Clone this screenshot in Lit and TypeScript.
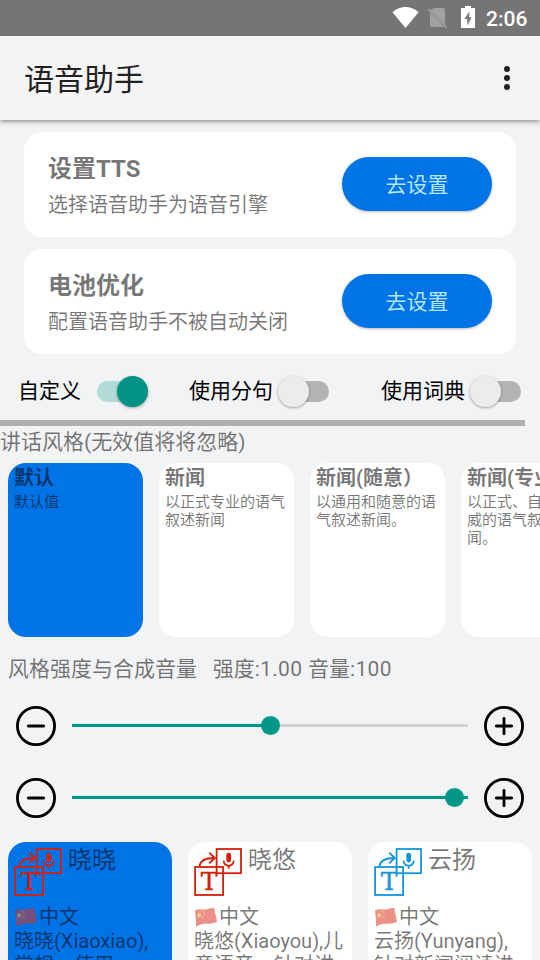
import { LitElement, html, css, svg } from "lit";
import { customElement, property } from "lit/decorators.js";
import { classMap } from "lit/directives/class-map.js";
import { styleMap } from "lit/directives/style-map.js";

@customElement("status-bar")
class StatusBar extends LitElement {
  static styles = css`
    :host { display: flex; height: 36px; background: #757575; color: #fff; flex: none;
      justify-content: flex-end; padding-right: 12px; box-sizing: border-box; position: relative; z-index: 1; }
    .time { font-weight: 500; font-size: 21px; line-height: 38px; width: 42px; margin-left: 10px; }
    svg { display: block; flex: none; }
  `;
  render() {
    return html`
      <svg width="84" height="36" viewBox="392 0 84 36">
        <path d="M392.4 12.2Q405.5 2 418.6 12.2L405.5 28Z" fill="#fff" />
        <path d="M434.2 8H443Q445 8 445 10V24.2L430.6 9.9ZM430 12.6L444 27H432Q430 27 430 25Z" fill="#a2a2a2" />
        <path d="M428.4 9.2L446.6 27.6" stroke="#a2a2a2" stroke-width="1.7" />
        <path d="M465 6h6v2h4v20h-14V8h4z" fill="#fff" />
        <path d="M469.6 11.5L464.3 19H467.3V25.5L471.7 17.3H469Z" fill="#757575" />
      </svg>
      <div class="time">2:06</div>
    `;
  }
}

@customElement("setting-card")
class SettingCard extends LitElement {
  @property() heading = "";
  @property() detail = "";
  static styles = css`
    :host { display: flex; align-items: center; justify-content: space-between; height: 105px;
      box-sizing: border-box; padding: 0 24px 1px; background: #fff; border-radius: 18px;
      color: rgba(0, 0, 0, 0.54); }
    .text { padding-top: 6px; }
    .heading { font-size: 24px; line-height: 36px; font-weight: 700; }
    .detail { font-size: 20px; line-height: 36px; }
    .go { font: inherit; font-size: 21px; width: 150px; height: 54px; padding: 0 0 2px; border: 0;
      border-radius: 27px; background: #0073e6; color: #b3e5fc;
      box-shadow: 0 1px 3px rgba(0, 0, 0, 0.28); }
  `;
  render() {
    return html`
      <div class="text">
        <div class="heading">${this.heading}</div>
        <div class="detail">${this.detail}</div>
      </div>
      <button class="go">去设置</button>
    `;
  }
}

@customElement("toggle-switch")
class ToggleSwitch extends LitElement {
  @property({ type: Boolean }) on = false;
  static styles = css`
    .switch { display: flex; align-items: center; width: 51px; height: 31px; }
    .track { display: flex; align-items: center; width: 51px; height: 21px; border-radius: 11px; background: #b3b4b6; }
    .thumb { width: 31px; height: 31px; border-radius: 50%; background: #ececec; flex: none;
      box-shadow: 0 1px 3px rgba(0, 0, 0, 0.35); }
    .on { justify-content: flex-end; background: #b2dcd8; }
    .on .thumb { background: #009385; }
  `;
  render() {
    return html`<div class="switch"><div class=${classMap({ track: true, on: this.on })}><div class="thumb"></div></div></div>`;
  }
}

@customElement("level-slider")
class LevelSlider extends LitElement {
  @property({ type: Number }) fill = 0;
  @property({ type: Number }) thumb = 0;
  static styles = css`
    :host { display: flex; align-items: center; flex: none; height: 72px; padding: 0 16px; gap: 16px; }
    .track { position: relative; flex: 1; height: 3px; margin-top: -1px; background: #d1d2d4; }
    .fill { height: 3px; background: #009688; }
    .thumb { position: absolute; top: -8px; width: 19px; height: 19px; margin-left: -9.5px;
      border-radius: 50%; background: #009688; }
    svg { display: block; flex: none; }
  `;
  icon(plus: boolean) {
    return html`<svg width="40" height="40" viewBox="0 0 40 40" fill="none" stroke="#000">
      <circle cx="20" cy="20" r="18.6" stroke-width="2.8" />
      <path d=${plus ? "M12.3 20H27.7M20 12.3V27.7" : "M12.3 20H27.7"} stroke-width="2.8" stroke-linecap="round" />
    </svg>`;
  }
  render() {
    return html`
      ${this.icon(false)}
      <div class="track">
        <div class="fill" style=${styleMap({ width: `${this.fill}%` })}></div>
        <div class="thumb" style=${styleMap({ left: `${this.thumb}%` })}></div>
      </div>
      ${this.icon(true)}
    `;
  }
}

@customElement("voice-card")
class VoiceCard extends LitElement {
  @property() name = "";
  @property() detail = "";
  @property() tint = "#d81e06";
  @property({ type: Boolean }) selected = false;
  static styles = css`
    :host { display: block; flex: none; width: 164px; }
    .card { height: 174px; box-sizing: border-box; padding: 6px 6px 0; border-radius: 18px; background: #fff;
      color: rgba(0, 0, 0, 0.54); overflow: hidden; }
    .selected { background: #0073e6; }
    .top { display: flex; gap: 6px; height: 56px; }
    .name { font-size: 24px; line-height: 24px; }
    .lang { display: flex; align-items: center; gap: 1px; font-size: 20px; line-height: 26px; height: 25px; }
    .detail { font-size: 20px; line-height: 24px; }
    .letter { font: 25px "DejaVu Serif", serif; }
    svg { display: block; flex: none; }
    .flag { opacity: 0.54; }
  `;
  render() {
    return html`
      <div class=${classMap({ card: true, selected: this.selected })}>
        <div class="top">
          <svg width="48" height="48" viewBox="0 0 48 48" fill="none" stroke=${this.tint}>
            <rect x="22.6" y="1" width="24.4" height="24.2" stroke-width="1.8" />
            <rect x="1.1" y="19" width="28" height="28" stroke-width="1.8" />
            <path d="M5.500 18.500C6 13 10 10 20.800 10M15.200 4.600L20.800 10L15.200 15.400" stroke-width="1.9" />
            <rect x="32.3" y="4.8" width="4.8" height="9.6" rx="2.4" fill=${this.tint} stroke="none" />
            <path d="M29.6 12.6C30 19.2 39.4 19.2 39.8 12.6M34.7 17.4V20.8" stroke-width="1.7" />
            <text class="letter" x="15.1" y="42" text-anchor="middle" fill=${this.tint} stroke-width="0.4">T</text>
          </svg>
          <div class="name">${this.name}</div>
        </div>
        <div class="lang">
          <svg class="flag" width="24" height="24" viewBox="0 0 24 24">
            <path d="M1 5.6C5 3 8 5 12 4.4C15.500 3.800 17 2.400 20.300 3.200C20.800 8 22.400 12 23 16.800C19 19 15 18.600 11 18.800C8 19 5 20 2 21.500C2.400 16 1.400 10 1 5.600Z" fill="#dd3522" />
            <path d="M4.800 7.600l.8 1.500 1.800-.1-1 1.500.8 1.500-1.800-.4-1.200 1.300-.1-1.800-1.500-.8 1.700-.7z" fill="#f5c52c" />
            <path d="M8 5.800h1v1H8zM9.500 7.500h1v1h-1zM9.500 10h1v1h-1zM8 12h1v1H8z" fill="#f5c52c" />
          </svg>
          <span>中文</span>
        </div>
        <div class="detail">${this.detail}</div>
      </div>
    `;
  }
}

@customElement("app-root")
class AppRoot extends LitElement {
  static styles = css`
    :host { display: flex; flex-direction: column; width: 540px; height: 960px; overflow: hidden;
      background: #f2f3f5; font-family: Roboto, "Noto Sans CJK SC", sans-serif; color: rgba(0, 0, 0, 0.54); }
    .appbar { display: flex; align-items: center; justify-content: space-between; height: 84px; flex: none;
      box-sizing: border-box; padding: 0 30px 0 24px; background: #f4f4f4;
      box-shadow: 0 1px 5px rgba(0, 0, 0, 0.5); }
    .title { font-size: 30px; line-height: 80px; padding-top: 4px; color: #212121; }
    .settings { display: flex; flex-direction: column; gap: 12px; padding: 12px 24px 0; }
    .switches { display: grid; grid-template-columns: 171px 192px auto; height: 66px; padding: 7px 0 0 18px;
      box-sizing: border-box; color: #000; font-size: 21px; }
    .switch { display: flex; gap: 5px; align-items: center; height: 60px; }
    .switch span { padding-bottom: 5px; }
    .switch.wide { gap: 16px; }
    .divider { width: 525px; height: 6px; background: #aeb0af; flex: none; }
    .label { box-sizing: border-box; padding-top: 1px; font-size: 21px; line-height: 30px; height: 37px;
      flex: none; white-space: pre; }
    .styles { display: flex; gap: 16px; padding-left: 8px; flex: none; }
    .style { flex: none; width: 135px; height: 174px; box-sizing: border-box; padding: 3px 6px; background: #fff;
      border-radius: 18px; font-size: 15px; line-height: 18px; }
    .style.selected { background: #0073e6; }
    .name { font-size: 20px; line-height: 24px; height: 27px; font-weight: 700; white-space: nowrap; }
    .levels { padding: 17px 8px 0; height: 53px; line-height: 30px; }
    .value { letter-spacing: 0.35px; }
    .voices { display: flex; gap: 16px; padding: 8px 8px 0; flex: none; }
  `;
  styleItems = [
    ["默认", "默认值"],
    ["新闻", "以正式专业的语气叙述新闻"],
    ["新闻(随意）", "以通用和随意的语气叙述新闻。"],
    ["新闻(专业)", "以正式、自信和权威的语气叙述新闻。"],
  ];
  render() {
    return html`
      <status-bar></status-bar>
      <div class="appbar">
        <div class="title">语音助手</div>
        <svg width="6" height="24" viewBox="0 0 6 24" fill="#212121">
          ${[3, 12, 21].map((y) => svg`<circle cx="3" cy=${y} r="3" />`)}
        </svg>
      </div>
      <div class="settings">
        <setting-card heading="设置TTS" detail="选择语音助手为语音引擎"></setting-card>
        <setting-card heading="电池优化" detail="配置语音助手不被自动关闭"></setting-card>
      </div>
      <div class="switches">
        <div class="switch wide"><span>自定义</span><toggle-switch on></toggle-switch></div>
        <div class="switch"><span>使用分句</span><toggle-switch></toggle-switch></div>
        <div class="switch"><span>使用词典</span><toggle-switch></toggle-switch></div>
      </div>
      <div class="divider"></div>
      <div class="label">讲话风格(无效值将将忽略)</div>
      <div class="styles">
        ${this.styleItems.map(([name, text], i) => html`
          <div class=${classMap({ style: true, selected: i === 0 })}>
            <div class="name">${name}</div>
            <div>${text}</div>
          </div>`)}
      </div>
      <div class="label levels">风格强度与合成音量   强度<span class="value">:1.00 </span>音量<span class="value">:100</span></div>
      <level-slider fill="50" thumb="50.1"></level-slider>
      <level-slider fill="100" thumb="96.6"></level-slider>
      <div class="voices">
        <voice-card selected name="晓晓" detail="晓晓(Xiaoxiao),常规、使用"></voice-card>
        <voice-card name="晓悠" detail="晓悠(Xiaoyou),儿童语音，针对讲"></voice-card>
        <voice-card name="云扬" tint="#1296db" detail="云扬(Yunyang),针对新闻阅读进"></voice-card>
      </div>
    `;
  }
}
